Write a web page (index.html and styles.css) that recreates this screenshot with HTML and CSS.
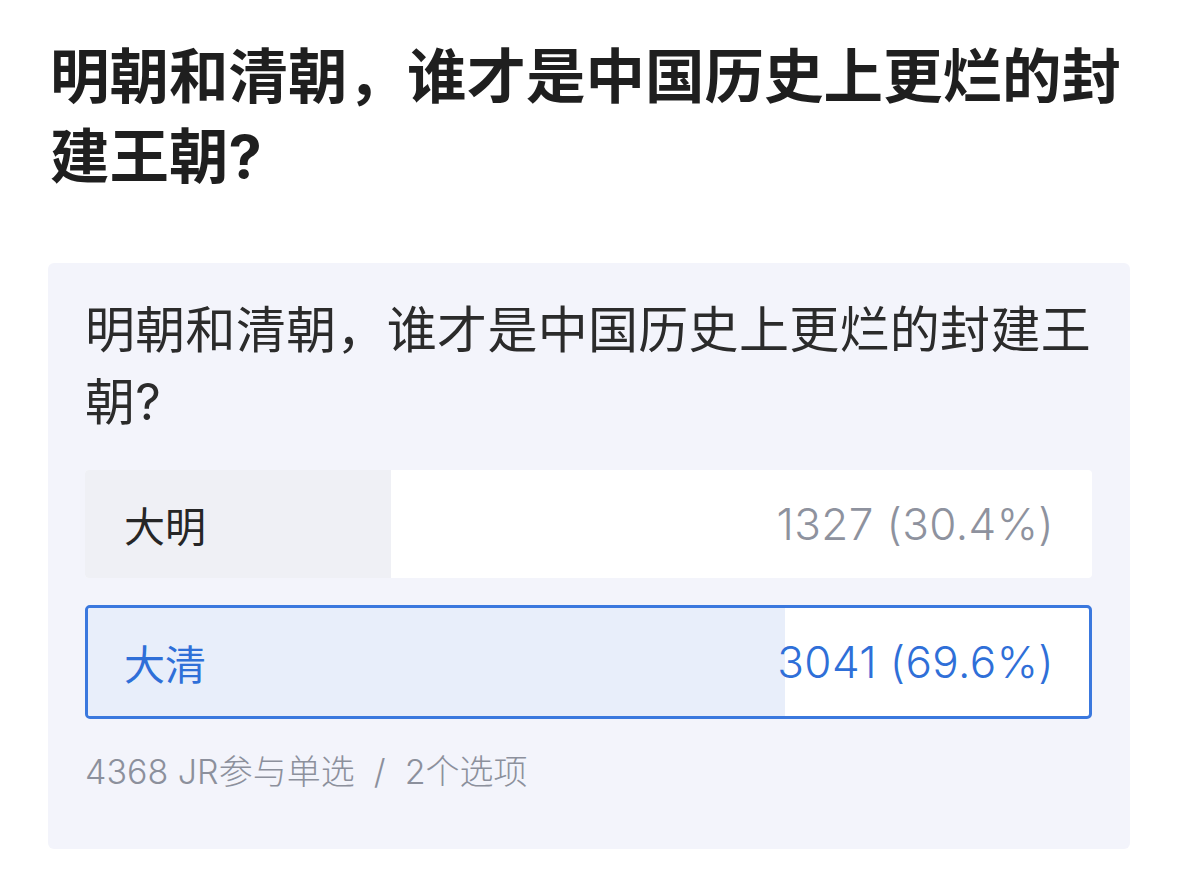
FILE: index.html
```html
<!DOCTYPE html>
<html lang="zh-CN">
<head>
    <meta charset="UTF-8">
    <title>明朝和清朝，谁才是中国历史上更烂的封建王朝?</title>
    <link rel="stylesheet" href="styles.css">
</head>
<body>
    <div class="page">
        <h1 class="title">明朝和清朝，谁才是中国历史上更烂的封建王朝?</h1>

        <div class="vote-card">
            <div class="question">明朝和清朝，谁才是中国历史上更烂的封建王朝?</div>

            <div class="options">
                <div class="option">
                    <div class="option-fill" style="width: 30.4%"></div>
                    <span class="option-name">大明</span>
                    <span class="option-count">1327 (30.4%)</span>
                </div>
                <div class="option selected">
                    <div class="option-fill" style="width: 69.6%"></div>
                    <span class="option-name">大清</span>
                    <span class="option-count">3041 (69.6%)</span>
                </div>
            </div>

            <div class="vote-meta">4368 JR参与单选 &nbsp;/ &nbsp;2个选项</div>
        </div>
    </div>
</body>
</html>
```

FILE: styles.css
```css
body {
    margin: 0;
    background-color: #ffffff;
    font-family: Inter, "Noto Sans CJK SC", "Noto Sans", sans-serif;
    color: #222;
}

.page {
    padding: 36px 49px 0 48px;
}

.title {
    margin: 0;
    font-size: 59.5px;
    line-height: 80px;
    font-weight: 700;
    color: #1f1f1f;
    padding-left: 2px;
}

.vote-card {
    margin-top: 67px;
    background-color: #f3f4fb;
    border-radius: 6px;
    padding: 31px 38px 0 37px;
    height: 555px;
}

.question {
    font-size: 50px;
    line-height: 72px;
    letter-spacing: 0.3px;
    color: #2b2b2b;
}

.options {
    margin-top: 32px;
    display: flex;
    flex-direction: column;
    gap: 27px;
}

.option {
    position: relative;
    display: flex;
    align-items: center;
    justify-content: space-between;
    height: 108px;
    padding: 0 38px 0 39px;
    background-color: #ffffff;
    border-radius: 4px;
    overflow: hidden;
    font-size: 44px;
    font-weight: 300;
}

.option-fill {
    position: absolute;
    left: 0;
    top: 0;
    bottom: 0;
    background-color: #eff0f5;
}

.option-name,
.option-count {
    position: relative;
}

.option-name {
    color: #262626;
    font-size: 41px;
    font-weight: 400;
}

.option-count {
    color: #8e929e;
    letter-spacing: 0.4px;
}

.option.selected {
    height: 108px;
    border: 3px solid #3a78de;
    border-radius: 5px;
    padding: 0 35px 0 36px;
}

.option.selected .option-fill {
    background-color: #e8eefa;
}

.option.selected .option-name,
.option.selected .option-count {
    color: #2f6fd8;
}

.vote-meta {
    margin-top: 28px;
    font-size: 34px;
    line-height: 50px;
    font-weight: 300;
    color: #8c909c;
}
```
